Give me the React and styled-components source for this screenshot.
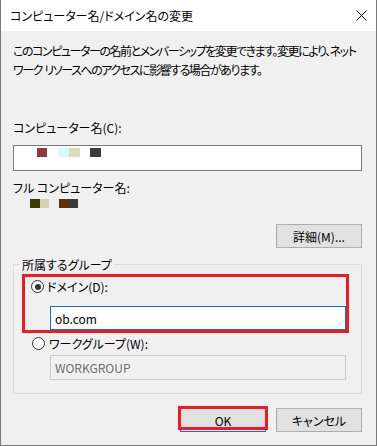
import styled, { createGlobalStyle } from 'styled-components';

const GlobalStyle = createGlobalStyle`
  body {
    margin: 0;
    font-family: "Noto Sans CJK JP", sans-serif;
    font-size: 12px;
    font-feature-settings: "palt";
    color: #000;
  }
`;

const nameBlocks = [
  { c: '#8e3a3a', w: 10, gap: 23 },
  { c: '#d5fcfc', w: 11, gap: 11 },
  { c: '#dcdcb8', w: 11, gap: 0 },
  { c: '#3b3b3b', w: 11, gap: 10 },
];

const fullNameBlocks = [
  { c: '#3a3a00', w: 10, gap: 17 },
  { c: '#d2d2b0', w: 9, gap: 0 },
  { c: '#5f3300', w: 10, gap: 10 },
  { c: '#3b3b3b', w: 9, gap: 0 },
];

const Dialog = styled.div`
  width: 377px;
  height: 446px;
  box-sizing: border-box;
  border: 1px solid #7a7a7a;
  border-top: none;
  background: #f0f0f0;
  display: flex;
  flex-direction: column;
`;

const TitleBar = styled.div`
  height: 31px;
  background: #fff;
  display: flex;
  align-items: center;
  justify-content: space-between;
  padding-left: 9px;
  flex-shrink: 0;
`;

const CloseButton = styled.div`
  width: 30px;
  height: 31px;
  display: flex;
  align-items: center;
  justify-content: center;
`;

const Body = styled.div`
  display: flex;
  flex-direction: column;
  padding: 10px 14px 0 12px;
`;

const Description = styled.p`
  margin: 0;
  line-height: 19px;
  white-space: nowrap;
  letter-spacing: -1.45px;
`;

const Label = styled.div`
  line-height: 19px;
  margin-top: ${p => p.$mt}px;
`;

const TextBox = styled.div`
  box-sizing: border-box;
  height: ${p => p.$h || 25}px;
  margin: ${p => p.$margin || '0'};
  border: 1px solid ${p => p.$border || '#7a7a7a'};
  background: ${p => p.$bg || '#fff'};
  color: ${p => p.$color || '#000'};
  display: flex;
  align-items: ${p => p.$align || 'center'};
  padding: ${p => p.$pad || '0 4px'};
  line-height: 19px;
`;

const Blocks = styled.div`
  display: flex;
  height: 9px;
  margin-top: ${p => p.$mt || 0}px;
`;

const Block = styled.span`
  width: ${p => p.$w}px;
  height: 9px;
  margin-left: ${p => p.$gap}px;
  background: ${p => p.$c};
`;

const Button = styled.div`
  position: relative;
  box-sizing: border-box;
  width: 86px;
  height: 24px;
  background: #e1e1e1;
  border: 1px solid ${p => (p.$default ? '#0078d7' : '#adadad')};
  display: flex;
  align-items: center;
  justify-content: center;
  line-height: 19px;
`;

const DetailButton = styled(Button)`
  align-self: flex-end;
  margin-top: 16px;
`;

const GroupBox = styled.fieldset`
  margin: 7px 0 0;
  padding: 0 12px 13px 8px;
  border: 1px solid #dcdcdc;
  min-width: 0;
  display: flex;
  flex-direction: column;
`;

const Legend = styled.legend`
  padding: 0 2px;
  margin-left: -2px;
  line-height: 19px;
`;

const Highlight = styled.div`
  border: 3px solid #ed1c24;
  display: flex;
  flex-direction: column;
`;

const RadioRow = styled.label`
  display: flex;
  align-items: center;
  height: 19px;
  padding-left: ${p => p.$indent}px;
  margin-top: ${p => p.$mt || 0}px;
  gap: ${p => p.$gap}px;
`;

const Radio = styled.span`
  box-sizing: border-box;
  width: 13px;
  height: 13px;
  border-radius: 50%;
  border: 1px solid #333;
  background: #fff;
  display: flex;
  align-items: center;
  justify-content: center;

  &::after {
    content: '';
    width: 6px;
    height: 6px;
    border-radius: 50%;
    background: ${p => (p.$checked ? '#333' : 'transparent')};
  }
`;

const ButtonRow = styled.div`
  display: flex;
  justify-content: flex-end;
  gap: 10px;
  margin-top: 14px;
`;

const Marker = styled.div`
  position: absolute;
  top: -3px;
  left: -3px;
  right: -3px;
  bottom: 1px;
  border: 3px solid #ed1c24;
  pointer-events: none;
`;

function App() {
  return (
    <>
      <GlobalStyle />
      <Dialog>
        <TitleBar>
          <span>コンピューター名/ドメイン名の変更</span>
          <CloseButton>
            <svg width="11" height="11" viewBox="0 0 11 11">
              <path d="M0.5 0.5 L10.5 10.5 M10.5 0.5 L0.5 10.5" stroke="#000" strokeWidth="1" />
            </svg>
          </CloseButton>
        </TitleBar>
        <Body>
          <Description>
            このコンピューターの名前とメンバーシップを変更できます。変更により、ネット
            <br />
            ワーク&nbsp;&nbsp;リソースへのアクセスに影響する場合があります。
          </Description>

          <Label $mt={39}>コンピューター名(C):</Label>
          <TextBox $h={26} $margin="8px 0 0" $align="flex-start" $pad="2px 0 0">
            <Blocks>
              {nameBlocks.map((b, i) => (
                <Block key={i} $w={b.w} $gap={b.gap} $c={b.c} />
              ))}
            </Blocks>
          </TextBox>

          <Label $mt={7}>フル コンピューター名:</Label>
          <Blocks $mt={2}>
            {fullNameBlocks.map((b, i) => (
              <Block key={i} $w={b.w} $gap={b.gap} $c={b.c} />
            ))}
          </Blocks>

          <DetailButton>詳細(M)...</DetailButton>

          <GroupBox>
            <Legend>所属するグループ</Legend>
            <Highlight>
              <RadioRow $indent={6} $gap={3}>
                <Radio $checked />
                ドメイン(D):
              </RadioRow>
              <TextBox $h={24} $border="#0078d7" $margin="10px 0 0 25px">
                ob.com
              </TextBox>
            </Highlight>
            <RadioRow $indent={10} $gap={4} $mt={1}>
              <Radio />
              ワークグループ(W):
            </RadioRow>
            <TextBox $border="#cccccc" $bg="#f0f0f0" $color="#6d6d6d" $margin="2px 3px 0 28px">
              WORKGROUP
            </TextBox>
          </GroupBox>

          <ButtonRow>
            <Button $default>
              OK
              <Marker />
            </Button>
            <Button>キャンセル</Button>
          </ButtonRow>
        </Body>
      </Dialog>
    </>
  );
}

export default App;
